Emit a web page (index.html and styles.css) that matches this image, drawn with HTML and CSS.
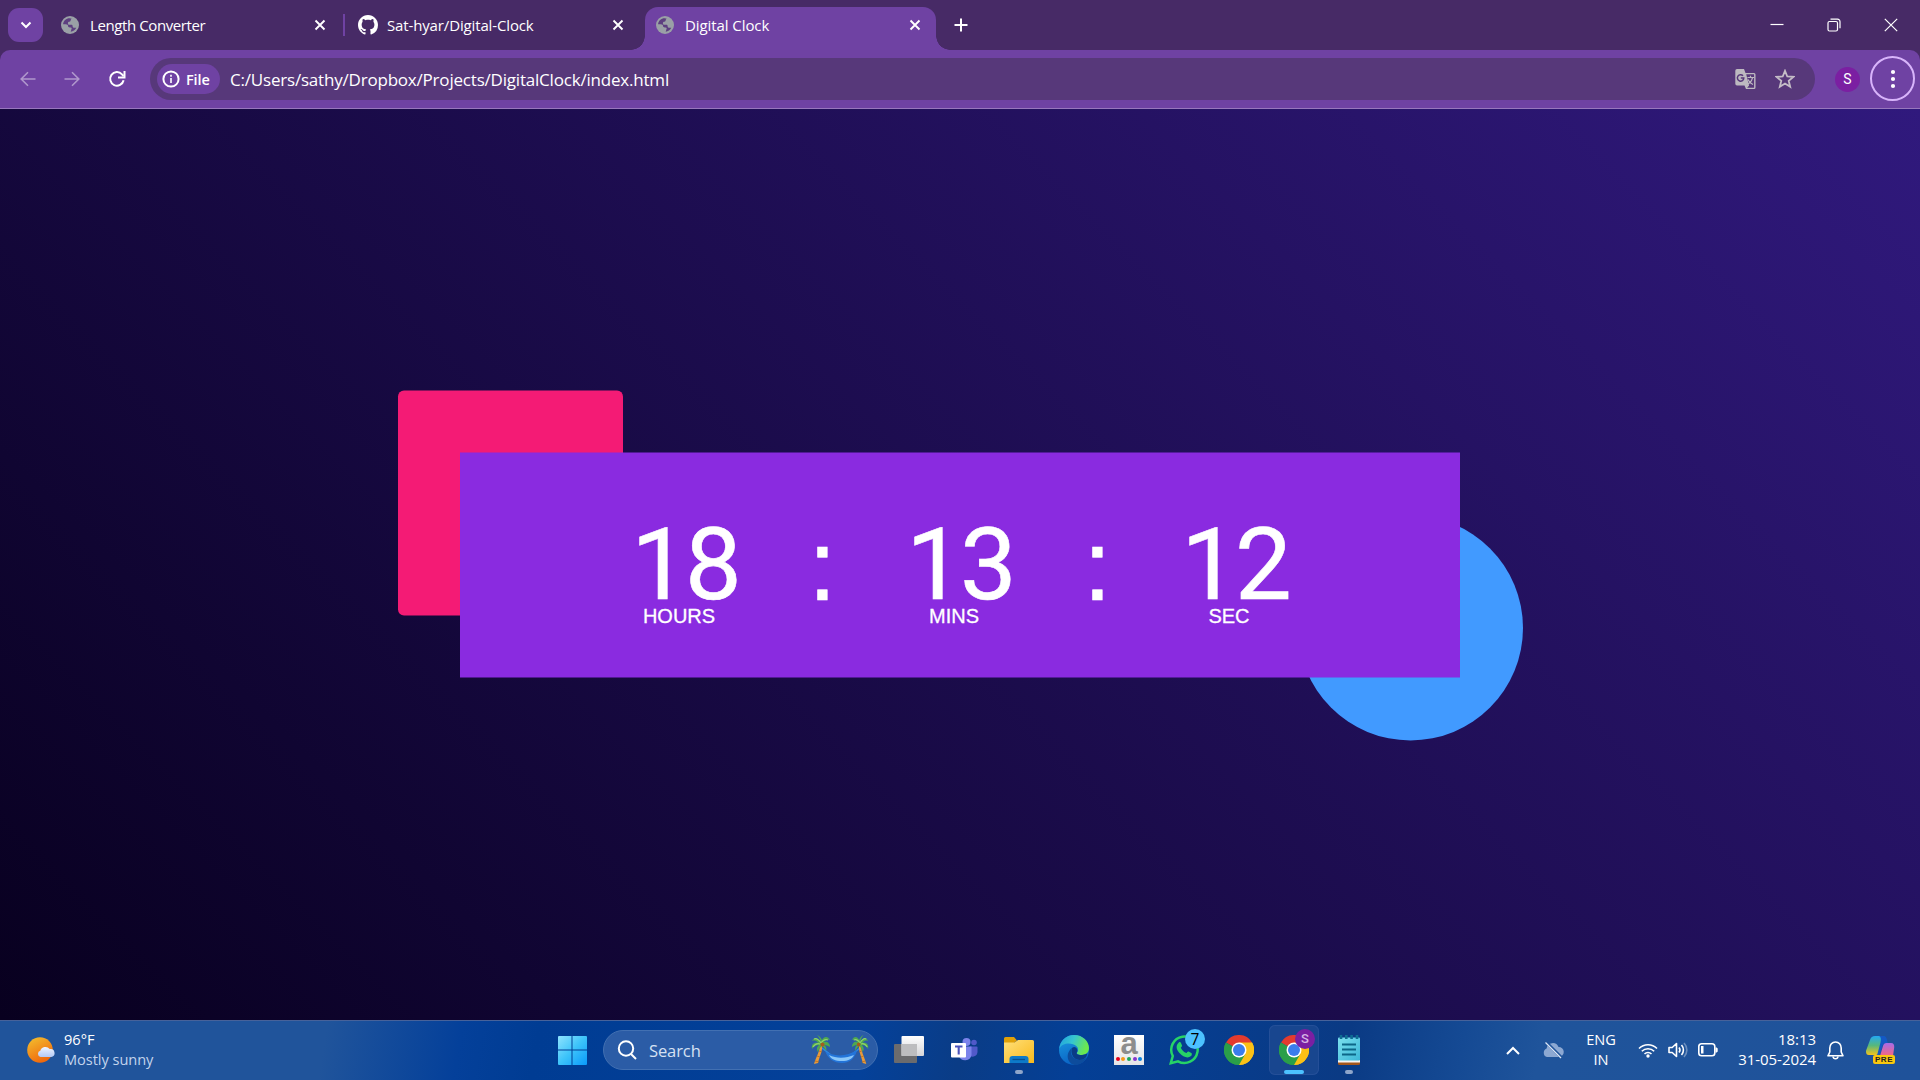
FILE: index.html
```html
<!DOCTYPE html>
<html lang="en">
<head>
<meta charset="utf-8">
<title>Digital Clock</title>
<link rel="stylesheet" href="styles.css">
</head>
<body>
<svg class="defs" width="0" height="0" aria-hidden="true">
  <defs>
    <linearGradient id="gSun" x1="0" y1="0" x2=".5" y2="1"><stop offset="0" stop-color="#f3c230"/><stop offset="1" stop-color="#f0690c"/></linearGradient>
    <linearGradient id="gWin" x1="0" y1="0" x2="1" y2="1"><stop offset="0" stop-color="#8fe3fd"/><stop offset=".5" stop-color="#3cc3fa"/><stop offset="1" stop-color="#0a9afa"/></linearGradient>
    <linearGradient id="gFold" x1="0" y1="0" x2="1" y2="1"><stop offset="0" stop-color="#ffe07a"/><stop offset="1" stop-color="#f9b91c"/></linearGradient>
    <linearGradient id="gEdgeA" x1="0" y1="0" x2="1" y2=".3"><stop offset="0" stop-color="#1f9fe0"/><stop offset=".5" stop-color="#36c6cf"/><stop offset="1" stop-color="#6be84f"/></linearGradient>
    <linearGradient id="gEdgeB" x1="0" y1="0" x2=".4" y2="1"><stop offset="0" stop-color="#1b9de2"/><stop offset="1" stop-color="#0a62c4"/></linearGradient>
    <linearGradient id="gCopA" x1="0" y1="0" x2="0" y2="1"><stop offset="0" stop-color="#23a9f3"/><stop offset=".5" stop-color="#57b87c"/><stop offset="1" stop-color="#f4c41b"/></linearGradient>
    <linearGradient id="gCopB" x1="0" y1="0" x2="0" y2="1"><stop offset="0" stop-color="#a86be8"/><stop offset="1" stop-color="#f5677f"/></linearGradient>
    <linearGradient id="gNote" x1="0" y1="0" x2="1" y2="1"><stop offset="0" stop-color="#7be0ee"/><stop offset="1" stop-color="#3bb6d8"/></linearGradient>
    <linearGradient id="gCloud" x1="0" y1="0" x2="0" y2="1"><stop offset="0" stop-color="#f0f5ff"/><stop offset="1" stop-color="#b3c9f5"/></linearGradient>
    <linearGradient id="gTile" x1="0" y1="0" x2="0" y2="1"><stop offset="0" stop-color="#fff"/><stop offset="1" stop-color="#d5d5d8"/></linearGradient>
  </defs>
  <symbol id="globe" viewBox="0 0 18 18">
    <circle cx="9" cy="9" r="9" fill="#9aa0a6"/>
    <path d="M8.800 2.200C5.500 2 2.300 4.700 2.100 8.200h2.700c1.700 0 2.300.8 2.300 1.900s.6 1.400 1.700 1.400h1c.9 0 1.100.9.700 1.600l-.8 2.700c2.500-.2 4.500-1.700 5.600-4h-1.800c-1.500 0-1.900-1-1.900-1.900 0-.8-.5-1.200-1.300-1.200H8.200c-.9 0-1.300-.7-1.300-1.500 0-.9.700-1.400 1.500-1.400.9 0 1.200-.5 1.200-1.200 0-1 .5-1.500 1.200-1.900z" fill="#5d3f80"/>
  </symbol>
  <symbol id="x" viewBox="0 0 12 12"><path d="M1.500 1.500l9 9M10.500 1.500l-9 9" stroke="#fff" stroke-width="1.900" fill="none"/></symbol>
  <symbol id="chrome" viewBox="0 0 30 30">
    <path d="M15 15L2 7.500A15 15 0 0 1 28 7.500z" fill="#e33b2e"/>
    <path d="M15 15L28 7.500A15 15 0 0 1 15 30z" fill="#fbc116"/>
    <path d="M15 15V30A15 15 0 0 1 2 7.500z" fill="#2a9f49"/>
    <path d="M15 7.500H28A15 15 0 0 1 15 30l6.500-11.200z" fill="#fbc116"/>
    <path d="M2 7.500l6.500 11.300L15 22.500l6.300-3.500L15 30A15 15 0 0 1 2 7.500z" fill="#2a9f49"/>
    <circle cx="15" cy="15" r="7.500" fill="#fff"/><circle cx="15" cy="15" r="6" fill="#3b7ded"/>
  </symbol>
  <symbol id="palm" viewBox="0 0 20 30">
    <path d="M11 10c1 6-3 12-4 18l-4 1C5 22 9 16 9 10z" fill="#e79a3a"/>
    <path d="M4 26l4 1M6 21l3 1M8 16l3 1" stroke="#b76c1e" stroke-width=".8"/>
    <path d="M10 8C7 2 3 2 1 6c3-1 5 0 6 2C3 7 0 9 1 14c2-3 4-4 7-4-2 2-3 4-1 7 1-4 3-5 4-6 2 1 3 3 4 5 1-3 0-5-2-6 3 0 4 1 6 2 0-4-3-6-6-5 1-2 3-3 6-2-2-4-6-4-8 0-1-2-2-4-5-5 2 2 3 4 4 8z" fill="#4fa84f"/>
    <path d="M10 8C8 5 5 3 3 4M10 8c2-3 4-4 7-3M9 9c-3-1-5 0-7 3" stroke="#91d46b" stroke-width="1.200" fill="none"/>
    <circle cx="11.500" cy="9.500" r="2" fill="#a45c1d"/>
  </symbol>
</svg>

<header class="browser">
  <div class="tabstrip">
    <button class="tab-search"><svg width="12" height="8" viewBox="0 0 12 8"><path d="M1.500 1.500L6 6l4.500-4.500" class="line w2"/></svg></button>
    <div class="tab first"><svg class="fav" width="18" height="18"><use href="#globe"/></svg><span class="t1">Length Converter</span><svg class="close" width="12" height="12"><use href="#x"/></svg></div>
    <i class="tab-sep"></i>
    <div class="tab second"><svg class="fav gh" width="20" height="20" viewBox="0 0 16 16"><path fill="#fff" d="M8 0C3.580 0 0 3.580 0 8c0 3.540 2.290 6.530 5.470 7.590.4.070.55-.17.55-.38 0-.19-.01-.82-.01-1.490-2.010.37-2.530-.49-2.690-.94-.09-.23-.48-.94-.82-1.130-.28-.15-.68-.52-.01-.53.63-.01 1.080.58 1.230.82.72 1.210 1.870.87 2.330.66.070-.52.28-.87.510-1.070-1.780-.2-3.640-.89-3.640-3.950 0-.87.310-1.590.82-2.150-.08-.2-.36-1.020.08-2.120 0 0 .67-.21 2.200.82.640-.18 1.320-.27 2-.27s1.360.09 2 .27c1.530-1.040 2.200-.82 2.200-.82.44 1.100.16 1.920.08 2.120.51.56.82 1.270.82 2.150 0 3.070-1.870 3.750-3.650 3.950.29.25.54.73.54 1.480 0 1.070-.01 1.930-.01 2.200 0 .21.15.46.55.38A8.010 8.010 0 0 0 16 8c0-4.420-3.580-8-8-8z"/></svg><span class="t2">Sat-hyar/Digital-Clock</span><svg class="close" width="12" height="12"><use href="#x"/></svg></div>
    <div class="tab active"><svg class="fav" width="18" height="18"><use href="#globe"/></svg><span class="t3">Digital Clock</span><svg class="close" width="12" height="12"><use href="#x"/></svg></div>
    <svg class="newtab" width="14" height="14" viewBox="0 0 14 14"><path d="M7 .5v13M.5 7h13" class="line w2"/></svg>
    <div class="win">
      <svg width="14" height="14" viewBox="0 0 14 14"><path d="M.5 6.500h13" class="line w1"/></svg>
      <svg width="14" height="14" viewBox="0 0 14 14"><rect x="1" y="3.500" width="9.500" height="9.500" rx="1.500" class="line w1"/><path d="M3.500 1.200h7a2.500 2.500 0 0 1 2.500 2.500v6.500" class="line w1"/></svg>
      <svg width="14" height="14" viewBox="0 0 14 14"><path d="M.8.800l12.400 12.400M13.200.800L.800 13.200" class="line w1"/></svg>
    </div>
  </div>
  <div class="toolbar">
    <nav class="nav">
      <svg class="dim" width="16" height="16" viewBox="0 0 16 16"><path d="M15.500 8H1.500M8 1.200L1.200 8 8 14.800" class="line w17"/></svg>
      <svg class="dim" width="16" height="16" viewBox="0 0 16 16"><path d="M.5 8h14M8 1.200L14.800 8 8 14.800" class="line w17"/></svg>
      <svg width="18" height="18" viewBox="0 0 18 18"><path d="M15.600 10.300A6.800 6.800 0 1 1 14 4.300l1.500 1.700" class="line w2"/><path d="M16.500 1v6.500H10" class="line w2"/></svg>
    </nav>
    <div class="omnibox">
      <span class="chip"><svg width="18" height="18" viewBox="0 0 18 18"><circle cx="9" cy="9" r="7.600" class="line w2"/><path d="M9 8v5M9 4.800v1.900" class="line w17"/></svg><b>File</b></span>
      <span class="url">C:/Users/sathy/Dropbox/Projects/DigitalClock/index.html</span>
      <svg class="translate" width="21" height="21" viewBox="0 0 21 21"><path d="M2 0h7l1.500 4H19a1.500 1.500 0 0 1 1.500 1.500v13A1.500 1.500 0 0 1 19 20h-8l-1.500-3.500H2A1.700 1.700 0 0 1 .3 14.800V1.700A1.700 1.700 0 0 1 2 0z" fill="#bdb9c0"/><path d="M11.200 5.300h7.900v13.400h-7l2-2.200z" fill="#57387a"/><path d="M12.500 8.500h6.500M15.500 6.800v1.700M17.500 8.700c-.6 3-2.500 5.300-5 6.500M13 10.500c1 2.400 2.600 4 5 5" stroke="#bdb9c0" stroke-width="1.200" fill="none"/><path d="M8 6.800A3.200 3.200 0 1 0 8.800 9H5.800" stroke="#57387a" stroke-width="1.500" fill="none"/></svg>
      <svg class="star" width="20" height="20" viewBox="0 0 20 20"><path d="M10 1.800l2.300 5.700 6.100.4-4.700 3.900 1.500 6L10 14.500l-5.200 3.300 1.500-6L1.600 7.900l6.100-.4z" fill="none" stroke="#c4bdc7" stroke-width="1.800"/></svg>
    </div>
    <span class="avatar">S</span>
    <span class="menu"><svg width="6" height="20" viewBox="0 0 6 20"><g fill="#fff"><circle cx="3" cy="3" r="2.100"/><circle cx="3" cy="10" r="2.100"/><circle cx="3" cy="17" r="2.100"/></g></svg></span>
  </div>
</header>

<main class="hero">
  <section class="clock">
    <div class="face">
      <div class="unit"><span>18</span><small>HOURS</small></div>
      <div class="unit colon"><span>:</span></div>
      <div class="unit"><span>13</span><small>MINS</small></div>
      <div class="unit colon"><span>:</span></div>
      <div class="unit"><span>12</span><small>SEC</small></div>
    </div>
  </section>
</main>

<footer class="taskbar">
  <div class="weather">
    <svg width="28" height="28" viewBox="0 0 28 28"><circle cx="13" cy="14" r="12.800" fill="url(#gSun)"/><path d="M13.500 21a3.200 3.200 0 0 1-.2-6.200 5.300 5.300 0 0 1 9.400-1.700A4 4 0 0 1 24.300 21z" fill="url(#gCloud)"/></svg>
    <div class="report"><p class="temp">96°F</p><p class="sky">Mostly sunny</p></div>
  </div>
  <div class="apps">
    <svg class="start" width="30" height="30" viewBox="0 0 30 30"><path d="M1 2a1 1 0 0 1 1-1h12.500v13.500H1zM15.500 1H29a1 1 0 0 1 1 1v12.500H15.500zM1 15.500h13.500V30H2a1 1 0 0 1-1-1zM15.500 15.500H30V29a1 1 0 0 1-1 1H15.500z" fill="url(#gWin)"/></svg>
    <div class="search">
      <svg width="20" height="20" viewBox="0 0 20 20"><circle cx="9" cy="8.500" r="7.200" class="line w2"/><path d="M14 14l5 5" class="line w2"/></svg>
      <span>Search</span>
      <svg class="beach" width="58" height="30" viewBox="0 0 58 30"><path d="M11 13l9 7M49 13l-9 7" stroke="#2c8be8" stroke-width="1.500"/><use href="#palm" x="0" y="0" width="20" height="30"/><g transform="translate(58 0) scale(-.9 1)"><use href="#palm" width="20" height="30"/></g><path d="M14 16c8 6 22 6 32-1-2 9-8 13-15 13-8 0-14-4-17-12z" fill="#2374d9"/><path d="M18 20c8 4 18 3 25 0-2 4-6 6-12 6-7 0-11-2-13-6z" fill="#8ac6f8"/></svg>
    </div>
    <div class="app"><svg width="30" height="28" viewBox="0 0 30 28"><rect x="0" y="8" width="23" height="19" rx="1" fill="#6b6b6d"/><rect x="7.500" y="0" width="22.500" height="20" rx="1" fill="url(#gTile)"/><path d="M7.500 8H23v12H7.500z" fill="#bdbdbf"/></svg></div>
    <div class="app"><svg width="28" height="26" viewBox="0 0 28 26"><circle cx="24" cy="5.500" r="2.800" fill="#5059c9"/><path d="M20 9.500h6.500a1 1 0 0 1 1 1V15a5 5 0 0 1-7.500 4z" fill="#5059c9"/><circle cx="16.500" cy="5" r="4" fill="#7b83eb"/><path d="M9 9.500h12.500V18a6.500 6.500 0 0 1-12.500 1z" fill="#7b83eb"/><rect x="1" y="6" width="15" height="14.500" rx="1" fill="#fff"/><path d="M5 9.500h7.500M8.700 9.500V17.500" stroke="#4b53bc" stroke-width="2.100"/></svg></div>
    <div class="app run"><svg width="30" height="26" viewBox="0 0 30 26"><path d="M0 1.500A1.500 1.500 0 0 1 1.500 0H10l3 3.500L10 6H0z" fill="#e0a008"/><path d="M0 5.500h10.500L14 3h14.500A1.500 1.500 0 0 1 30 4.500V26H0z" fill="url(#gFold)"/><path d="M5.500 26v-4a3 3 0 0 1 3-3h13a3 3 0 0 1 3 3v4z" fill="#0d7ac9"/><path d="M8.500 22.500H21" stroke="#074f8f" stroke-width="1.300"/></svg></div>
    <div class="app"><svg width="30" height="30" viewBox="0 0 30 30"><circle cx="15" cy="15" r="15" fill="url(#gEdgeB)"/><path d="M.2 14C1 5.500 7.500 0 15 0c9 0 15 6.500 15 13 0 5-4 7-7.500 7-3.500 0-5.200-1.400-4.400-2.500 1.500-2 1.400-4.600-.8-6.500C13.500 7.500 3 7 .2 14z" fill="url(#gEdgeA)"/><path d="M13.200 12.800c-3.700 5 .8 12.200 7.300 12.200 3 0 5.500-1 7.500-2.500C25 27.500 20.500 30 15.500 30 8 28.500 6 18 13.200 12.800z" fill="#0d4c9c"/><path d="M13.500 12.500c3-2 6 2 4.500 4.800-1.200 1.600.5 2.700 4.500 2.700 2.500 0 4.500-.8 5.500-1.500.5 3-3 6.500-7.500 6.500C13.500 25 10.500 16 13.500 12.500z" fill="#0a3c86"/></svg></div>
    <div class="app"><span class="amazon"><b>a</b><i><u></u><u></u><u></u><u></u><u></u></i></span></div>
    <div class="app"><svg width="30" height="30" viewBox="0 0 30 30"><path d="M1.800 28.200l2-7.200A13.200 13.200 0 1 1 9 26.300z" fill="none" stroke="#27d366" stroke-width="2.500"/><path d="M9.800 7.500c.8-.7 1.800-.5 2.200.4l1 2.500c.3.800-.8 1.700-1.200 2.300 1.200 2.500 3 4.300 5.600 5.400.6-.5 1.400-1.900 2.200-1.500l2.700 1.300c1 .5.500 2.400-.3 3.200-3.500 3-8.300.3-11-2.500-2.600-2.700-5.500-7.400-1.200-11.100z" fill="#27d366"/></svg><span class="badge blue">7</span></div>
    <div class="app"><svg width="30" height="30"><use href="#chrome"/></svg></div>
    <div class="app current"><svg width="30" height="30"><use href="#chrome"/></svg><span class="badge violet">S</span></div>
    <div class="app run"><svg width="22" height="30" viewBox="0 0 22 30"><path d="M0 26h22v2.500a1.500 1.500 0 0 1-1.500 1.500h-19A1.500 1.500 0 0 1 0 28.500z" fill="#a4561b"/><path d="M0 25h22v2.500H0z" fill="#f4f4f4"/><rect y="2.500" width="22" height="23" rx="1" fill="url(#gNote)"/><path d="M4 9.500h14M4 14.500h14M4 19.500h14" stroke="#0d6688" stroke-width="1.900"/><path d="M3 0v4M8.300 0v4M13.600 0v4M19 0v4" stroke="#0e6d92" stroke-width="2.600"/></svg></div>
  </div>
  <div class="tray">
    <svg class="up" width="14" height="9" viewBox="0 0 14 9"><path d="M1 8l6-6 6 6" class="line w2"/></svg>
    <svg class="cloud" width="22" height="18" viewBox="0 0 22 18"><path d="M5 16a4.500 4.500 0 0 1-.4-8.500A6.200 6.200 0 0 1 16.500 6 5 5 0 0 1 17 16z" fill="#8ca8d2"/><path d="M4.500 1.500L20 17" stroke="#20549b" stroke-width="3"/><path d="M3.500 1.500L19 17" stroke="#dbe6f5" stroke-width="1.300"/></svg>
    <p class="lang">ENG<br>IN</p>
    <svg class="wifi" width="20" height="15" viewBox="0 0 20 15"><path d="M1 5.500a12.700 12.700 0 0 1 18 0M3.800 8.300a8.800 8.800 0 0 1 12.400 0M6.500 11a5 5 0 0 1 7 0" class="line w17"/><circle cx="10" cy="13" r="1.700" fill="#fff"/></svg>
    <svg class="vol" width="20" height="16" viewBox="0 0 20 16"><path d="M1 5.500h3.200L8.500 1.500v13l-4.300-4H1z" class="line w17" stroke-linejoin="round"/><path d="M11 5.500a4 4 0 0 1 0 5M13.500 3a7.500 7.500 0 0 1 0 10" class="line w17"/><path d="M16 1a10 10 0 0 1 0 14" class="line w17" opacity=".35"/></svg>
    <svg class="bat" width="20" height="14" viewBox="0 0 20 14"><rect x=".8" y=".8" width="16" height="12" rx="2.800" class="line w17"/><path d="M3 3h2.500v7.600H3zM17.500 4.500h1.200l1 1v3l-1 1h-1.200z" fill="#fff"/></svg>
    <p class="date">18:13<br>31-05-2024</p>
    <svg class="bell" width="17" height="19" viewBox="0 0 17 19"><path d="M8.500 1C5 1 2.800 3.700 2.800 7v4L1 14.800h15L14.200 11V7c0-3.300-2.200-6-5.700-6z" class="line w17" stroke-linejoin="round"/><path d="M6 15.500c.4 3 4.600 3 5 0" class="line w17"/></svg>
    <span class="copilot"><svg width="30" height="28" viewBox="0 0 30 28"><path d="M4 4C4.800 1.500 6.500 0 9 0h9l-2 4-2.500 11a4 4 0 0 1-4 4H3C.5 19-.3 17 .1 14.500z" fill="url(#gCopA)"/><path d="M13 0h4.500c2.500 0 3 2 3.500 4l.8 3H20c-2 0-3 1-3.600 3L14 18c-.6 1-1.500 1.500-3 1.500l3.500-13C15.300 3 15 .5 13 0z" fill="#1459c5"/><path d="M20.500 7H25c2.500 0 3.500 2 3.200 4.500L27 20H14l3-10c.6-2 1.500-3 3.500-3z" fill="url(#gCopB)"/></svg><b>PRE</b></span>
  </div>
</footer>
</body>
</html>
```
FILE: styles.css
```css
* { box-sizing: border-box; }
body {
  margin: 0;
  width: 1920px;
  height: 1080px;
  overflow: hidden;
  display: flex;
  flex-direction: column;
  font-family: "Open Sans", "Noto Sans", sans-serif;
  color: #fff;
  background: #472a66;
}
p { margin: 0; }
svg { display: block; flex: none; }
.defs { position: absolute; }
.line { fill: none; stroke: #fff; }
.w1 { stroke-width: 1.2; }
.w17 { stroke-width: 1.6; }
.w2 { stroke-width: 2; }

/* Browser chrome */
.browser { flex: none; height: 109px; }
.tabstrip { height: 50px; display: flex; align-items: center; padding-left: 8px; }
.tab-search {
  width: 35px; height: 34px; padding: 0; border: 0; border-radius: 11px;
  background: #6f42a3; display: grid; place-items: center;
}
.tab { display: flex; align-items: center; height: 50px; font-size: 15px; white-space: nowrap; }
.tab .fav { margin-right: 11px; }
.tab .gh { margin-right: 9px; }
.tab .close { margin-left: auto; }
.first { width: 265px; margin-left: 18px; }
.tab-sep { width: 2px; height: 22px; background: #6f42a3; margin-left: 17px; }
.second { width: 266px; margin-left: 13px; }
.t1 { letter-spacing: -.4px; }
.t2 { letter-spacing: -.14px; }
.t3 { letter-spacing: -.08px; }
.active {
  position: relative; align-self: flex-end; width: 291px; height: 43px; margin-left: 21px;
  padding: 0 15px 7px 11px; border-radius: 13px 13px 0 0; background: #6f42a3;
}
.active::before, .active::after { content: ""; position: absolute; bottom: 0; width: 14px; height: 14px; }
.active::before { left: -14px; background: radial-gradient(circle at 0 0, transparent 13.5px, #6f42a3 14px); }
.active::after { right: -14px; background: radial-gradient(circle at 100% 0, transparent 13.5px, #6f42a3 14px); }
.newtab { margin-left: 18px; }
.win { display: flex; gap: 43px; margin-left: auto; padding-right: 22px; }
.toolbar {
  height: 59px; display: flex; align-items: center; padding: 0 5px 0 20px;
  background: #6f42a3; border-bottom: 1px solid #9877bd; border-radius: 10px 10px 0 0;
}
.nav { display: flex; align-items: center; gap: 28px; width: 130px; }
.dim { opacity: .45; }
.omnibox {
  width: 1665px; height: 42px; border-radius: 21px; background: #57387a;
  display: flex; align-items: center; padding: 0 20px 0 7px;
}
.chip {
  width: 63px; height: 30px; border-radius: 15px; background: #6f42a3;
  display: flex; align-items: center; gap: 6px; padding-left: 5px; font-size: 14.5px;
}
.chip b { font-weight: 600; letter-spacing: -.1px; }
.url { margin-left: 10px; font-size: 17px; letter-spacing: -.2px; white-space: nowrap; }
.translate { margin-left: auto; }
.star { margin-left: 19px; }
.avatar {
  width: 25px; height: 25px; border-radius: 50%; margin-left: 20px; background: #7b1fa2;
  font: 14px/25px Roboto, sans-serif; text-align: center;
}
.menu {
  width: 45px; height: 45px; border: 2px solid #d8b4fb; border-radius: 50%;
  margin: 0 0 1px auto; display: grid; place-items: center;
}

/* Clock page */
.hero {
  flex: 1; display: grid; place-items: center;
  background: linear-gradient(45deg, #08001f, #30197d);
}
.clock {
  position: relative; width: 1000px; height: 225px; transform: translateY(.5px);
  font-family: "Liberation Sans", Arial, sans-serif;
}
.clock::before, .clock::after { content: ""; position: absolute; width: 225px; height: 225px; }
.clock::before { left: -62px; top: -62px; border-radius: 6px; background: #f41b75; }
.clock::after { right: -63px; bottom: -63px; border-radius: 50%; background: #419aff; }
.face {
  position: relative; z-index: 1; height: 100%; padding-top: 60px; background: #8a2be0;
  display: grid; grid-template-columns: repeat(5, 137.5px); justify-content: center;
}
.unit { text-align: center; }
.unit span { display: block; font: 101px/103px Roboto, sans-serif; height: 91px; letter-spacing: -3px; -webkit-text-stroke: .6px #fff; }
.colon span { font: 100px/104px "Liberation Sans", Arial, sans-serif; letter-spacing: 0; }
.unit small { display: block; font-size: 20px; line-height: 24px; padding-right: 12px; -webkit-text-stroke: .3px #fff; }

/* Taskbar */
.taskbar {
  flex: none; height: 60px; display: grid; grid-template-columns: 540px 860px 1fr; align-items: center;
  border-top: 1px solid #47629a; padding-bottom: 1px;
  background: linear-gradient(100deg, #20549b 0, #20549b 17%, #04409a 24%, #003c93 28%, #04419a 45%, #0a3c86 50%, #043f96 56%, #0a3a84 70%, #154a94 76%, #1f549b 80%, #1f529a 100%);
}
.weather { display: flex; align-items: center; padding-left: 27px; gap: 9px; font-size: 14.6px; line-height: 20px; }
.report, .lang, .date { padding-bottom: 2px; }
.sky { color: #c2d3ec; letter-spacing: -.05px; }
.apps { display: flex; align-items: center; padding-left: 17px; }
.start { margin-right: 16px; }
.search {
  width: 275px; height: 40px; border-radius: 20px; background: #2b5ca6; border: 1px solid #4270b2;
  display: flex; align-items: center; padding: 0 8px 0 13px; margin-right: 6px; font-size: 16.5px; color: #d5e1f3;
}
.search span { margin-left: 12px; letter-spacing: -.1px; }
.beach { margin-left: auto; }
.app { position: relative; width: 50px; height: 50px; margin-right: 5px; display: grid; place-items: center; flex: none; }
.run::after, .current::after { content: ""; position: absolute; left: 21px; bottom: 1px; width: 8px; height: 4px; border-radius: 2px; background: #8ea5ca; }
.current { background: #18468f; border-radius: 6px; box-shadow: inset 0 0 0 1px #244f98; }
.current::after { left: 15px; width: 20px; background: #4cc2ff; }
.badge { position: absolute; left: 26px; top: 4px; width: 20px; height: 20px; border-radius: 50%; text-align: center; line-height: 20px; }
.blue { background: #4cc2ff; color: #000; font-size: 15.5px; }
.violet { background: #7b1fa2; color: #d5b5e4; font: 500 13px/20px Roboto, sans-serif; }
.amazon { width: 30px; height: 30px; background: linear-gradient(#fff, #e4e4e6); display: flex; flex-direction: column; align-items: center; }
.amazon b { height: 22px; color: #8d8d8d; font: bold 31px/18px "Liberation Sans", sans-serif; }
.amazon i { display: flex; gap: 1.5px; }
.amazon u { width: 4.2px; height: 4.2px; border-radius: 50%; background: #e5001c; }
.amazon u:nth-child(2) { background: #f59a1b; }
.amazon u:nth-child(3) { background: #19a85a; }
.amazon u:nth-child(4) { background: #8535cf; }
.amazon u:nth-child(5) { background: #0a84e0; }
.tray { display: flex; align-items: center; padding: 0 24px 0 106px; font-size: 14.6px; line-height: 20px; }
.cloud { margin-left: 22px; }
.lang { width: 40px; margin-left: 17px; text-align: center; }
.wifi { margin-left: 17px; }
.vol { margin-left: 10px; }
.bat { margin-left: 10px; }
.date { width: 90px; margin-left: 8px; text-align: right; white-space: nowrap; font-size: 15px; letter-spacing: -.05px; }
.bell { margin-left: 11px; }
.copilot { position: relative; margin-left: 22px; }
.copilot b {
  position: absolute; left: 7px; top: 19px; width: 22px; height: 9px; border-radius: 2px;
  background: #f9c80e; color: #222; font: bold 8px/9px "Liberation Sans", sans-serif; text-align: center; letter-spacing: .5px;
}
```
